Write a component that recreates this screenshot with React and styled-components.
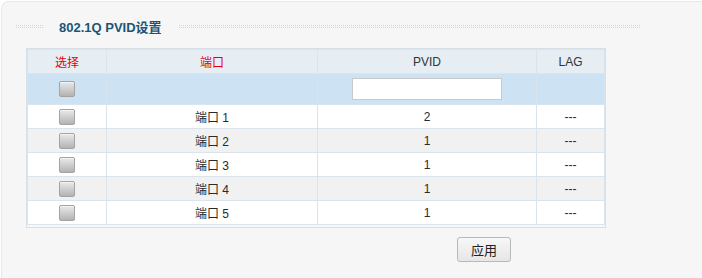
import React from "react";
import styled, { createGlobalStyle } from "styled-components";

const GlobalStyle = createGlobalStyle`
  html, body {
    margin: 0;
    padding: 0;
    background: #ffffff;
    font-family: "Liberation Sans", Arial, "Noto Sans CJK SC", sans-serif;
    font-size: 12px;
    color: #333333;
  }
`;

const Panel = styled.div`
  margin: 1px 0 0 1px;
  min-height: 277px;
  box-sizing: border-box;
  background: #f6f6f6;
  border-top: 1px solid #e8e8e8;
  border-left: 1px solid #e8e8e8;
  border-top-left-radius: 8px;
  padding: 14px 0 0 13px;
`;

const TitleBar = styled.div`
  display: flex;
  align-items: center;
  width: 625px;
  height: 20px;
`;

const Dots = styled.div`
  height: 5px;
  width: ${({ $width }) => ($width ? `${$width}px` : "auto")};
  flex: ${({ $grow }) => ($grow ? 1 : "none")};
  background-color: #c8d5e2;
  background-image: linear-gradient(to right, #f6f6f6 1px, transparent 1px),
    linear-gradient(to bottom, #f6f6f6 1px, transparent 1px);
  background-size: 2px 2px;
`;

const Title = styled.h2`
  margin: 0 16px 0 15px;
  font-size: 13px;
  font-weight: bold;
  color: #1c5574;
  white-space: nowrap;
`;

const TableBox = styled.div`
  margin: 12px 0 0 11px;
  width: 580px;
  box-sizing: border-box;
  border: 1px solid #d6e0e8;
  padding: 0 0 2px 0;
  background: #f6f8fa;
`;

const Grid = styled.table`
  width: 100%;
  border-collapse: collapse;
  table-layout: fixed;
`;

const HeadCell = styled.th`
  height: 23px;
  padding: 0;
  font-weight: normal;
  font-size: 12px;
  background: #e6eef4;
  border: 1px solid #d9e4ed;
  color: ${({ $red }) => ($red ? "#e8000b" : "#333333")};
  text-align: center;
  width: ${({ $w }) => $w}px;
`;

const Row = styled.tr`
  background: ${({ $tone }) =>
    $tone === "blue" ? "#cde2f2" : $tone === "grey" ? "#f1f1f1" : "#ffffff"};
`;

const Cell = styled.td`
  height: ${({ $tall }) => ($tall ? 30 : 23)}px;
  padding: 0;
  border: 1px solid #d9e4ed;
  text-align: center;
  vertical-align: middle;
  font-size: 12px;
  color: #2a2a2a;
`;

const Check = styled.span`
  display: inline-block;
  vertical-align: middle;
  width: 14px;
  height: 14px;
  border: 1px solid #a3a3a3;
  border-radius: 2px;
  background: linear-gradient(to bottom, #e9e9e9 0%, #c9c9c9 60%, #b3b3b3 100%);
  box-shadow: inset 0 1px 0 #f4f4f4;
`;

const PvidInput = styled.input`
  display: block;
  margin: 0 auto;
  width: 150px;
  height: 22px;
  box-sizing: border-box;
  border: 1px solid #c9c9c9;
  background: #ffffff;
  font-family: inherit;
  font-size: 12px;
  outline: none;
`;

const Actions = styled.div`
  display: flex;
  padding: 9px 0 0 442px;
`;

const Button = styled.button`
  width: 54px;
  height: 25px;
  padding: 0;
  border: 1px solid #b8b8b8;
  border-radius: 3px;
  background: linear-gradient(to bottom, #f7f7f7, #e6e6e6);
  font-family: "Liberation Sans", "Noto Sans CJK SC", sans-serif;
  font-size: 13px;
  color: #222222;
  cursor: pointer;
`;

const ports = [
  { name: "端口 1", pvid: 2 },
  { name: "端口 2", pvid: 1 },
  { name: "端口 3", pvid: 1 },
  { name: "端口 4", pvid: 1 },
  { name: "端口 5", pvid: 1 },
];

export default function App() {
  return (
    <>
      <GlobalStyle />
      <Panel>
        <TitleBar>
          <Dots $width={29} />
          <Title>802.1Q PVID设置</Title>
          <Dots $grow />
        </TitleBar>
        <TableBox>
          <Grid>
            <thead>
              <tr>
                <HeadCell $red $w={78}>选择</HeadCell>
                <HeadCell $red $w={210}>端口</HeadCell>
                <HeadCell $w={218}>PVID</HeadCell>
                <HeadCell>LAG</HeadCell>
              </tr>
            </thead>
            <tbody>
              <Row $tone="blue">
                <Cell $tall><Check /></Cell>
                <Cell $tall />
                <Cell $tall><PvidInput type="text" defaultValue="" /></Cell>
                <Cell $tall />
              </Row>
              {ports.map((p, i) => (
                <Row key={p.name} $tone={i % 2 === 1 ? "grey" : "white"}>
                  <Cell><Check /></Cell>
                  <Cell>{p.name}</Cell>
                  <Cell>{p.pvid}</Cell>
                  <Cell>---</Cell>
                </Row>
              ))}
            </tbody>
          </Grid>
        </TableBox>
        <Actions>
          <Button>应用</Button>
        </Actions>
      </Panel>
    </>
  );
}
